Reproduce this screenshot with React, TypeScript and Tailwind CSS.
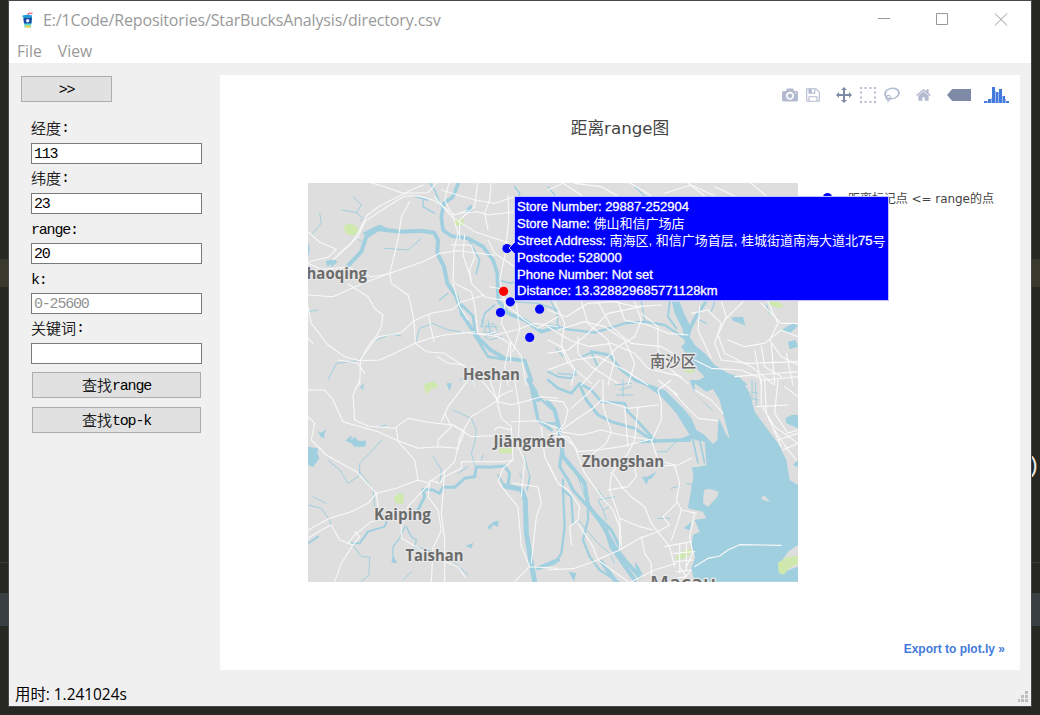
import React from "react";

const WATER = "#a0cfdf";
const LAND = "#dedede";
const PARK = "#cfe8ae";

type Road = string;

const roadsNW: Road[] = [
  "M0,155 L35,187 L85,208 L60,232 L0,246",
  "M0,250 L40,268 L120,262 L190,290 L240,282",
  "M0,345 L75,350 L160,312 L245,280 L345,245 L395,220 L450,212 L560,226",
  "M75,240 L130,190 L155,150 L178,105 L215,78 L270,50 L310,30 L345,15",
  "M90,225 L150,170 L170,125 L240,78 L290,48 L335,48 L380,62 L440,105 L480,90",
  "M160,0 L230,20 L285,40 L360,38 L385,10",
  "M305,65 L280,110 L272,170 L258,230 L245,280 L250,310 L300,345 L310,380 L318,425 L322,490 L355,515 L410,520 L470,560 L500,615",
  "M120,312 L180,350 L200,385 L225,405 L220,440 L207,465 L180,500 L158,540 L155,615",
  "M0,380 L10,430 L60,495 L110,530 L155,542 L215,540 L260,520 L322,490 L365,475 L410,465 L500,455",
  "M155,540 L210,470 L280,458 L318,422 L370,400 L435,388 L460,365 L530,345",
  "M362,405 L368,440 L378,485 M388,530 L420,550 L470,555",
  "M425,0 L410,60 L435,110 L450,160 L438,210 L435,310 L455,380 L480,420",
  "M380,50 L430,110 L500,155 L560,175 L600,188",
  "M510,0 L500,80 L455,120 L455,180 M550,0 L545,60 L530,100 L540,150",
  "M600,45 L602,120 L590,230 L575,300 L592,370 L580,430 L608,485 L640,530 L655,615",
  "M430,195 L490,195 L500,230 L485,270 L490,310 L530,350 L580,360 L640,350",
  "M440,310 L490,335 L500,375 L510,460 L570,470 L605,490 M605,490 L590,560 L600,615",
  "M455,100 L510,95 L540,105 L620,95 M400,30 L500,60 L560,70 L620,50",
  "M540,180 L560,220 L620,260 M545,320 L600,330 M460,455 L530,465 L565,455 M560,465 L625,450 L680,430 L750,440",
  "M0,475 L15,490 M90,540 L150,550 L170,580 M600,380 L650,420 L690,445 L750,410 M625,370 L635,450 L615,515",
  "M608,485 L608,545 M470,165 L465,225 L490,300",
];
const roadsNE: Road[] = [
  "M0,30 L45,10 L100,45 M80,10 L160,20 L210,48 M230,0 L290,35 L310,48 M350,40 L430,15 L500,48 M420,10 L470,48 M500,20 L560,48 M610,10 L655,48",
  "M0,390 L55,410 L120,370 L200,365 L260,380 L340,375",
  "M20,365 L50,430 L40,495 L80,570 L70,615",
  "M0,440 L65,480 L125,500 L190,490 L260,520 L300,565 L400,590",
  "M100,365 L120,430 L180,480 L200,540 L180,615",
  "M150,365 L190,440 L250,490 L340,500 L400,535",
  "M210,365 L230,420 L300,435 L360,460 L420,465",
  "M260,365 L280,420 L260,470 L210,500 L150,560 L100,615",
  "M0,520 L60,510 L120,460 L180,400 L280,380",
  "M0,570 L80,540 L150,530 L230,570 L300,615",
  "M280,400 L330,440 L330,510 L370,570 L420,610",
  "M30,450 L110,425 L170,440 L230,480 L260,550 L240,615",
  "M430,400 L480,390 L520,430 L500,490 L520,540 L600,550 L750,545",
  "M520,365 L535,410 L510,465 L530,520 L610,560 L680,615",
  "M540,480 L590,500 L650,490 L700,450 L750,470",
  "M660,365 L690,430 L665,480 L700,530 L750,555",
  "M440,540 L490,565 L580,570 L650,600 L750,590",
  "M585,365 L530,420 M640,370 L700,430 L750,430 M640,500 L650,560 L700,590",
  "M455,380 L450,450 L490,535 M620,510 L640,615 M670,490 L680,610 M715,520 L735,615 M560,590 L750,575",
  "M0,480 L40,500 L60,550 L130,610 M90,470 L90,520 L130,560 L210,610",
];
const roadsSW: Road[] = [
  "M0,30 L50,30 L75,60 L105,125 L210,155 L265,180 L330,205 L390,200 L450,205",
  "M155,0 L135,45 L140,120 L180,138 L260,145 L300,115 L360,127 L435,135 L490,170 L590,165",
  "M0,110 L20,130 L10,180 L55,225 L145,275 L205,340 L265,325 L330,300 L365,310",
  "M205,340 L180,370 L130,395 L65,415 L0,450",
  "M265,145 L270,185 L320,240 L330,300",
  "M435,135 L470,155 L450,200 L440,245 L410,275 L365,305",
  "M580,0 L570,60 L540,80 L490,110 L455,170 L450,210",
  "M520,0 L565,55 L580,115 L610,140 L615,240 L585,265 L570,305 L605,350 L630,380 L640,500 L665,560",
  "M400,125 L420,80 L455,35 L480,0 M545,0 L570,65 L610,75 L700,50 L750,55",
  "M620,0 L635,90 L630,200 L650,240 L640,350",
  "M365,305 L360,350 L390,390 L400,450 L375,505 L370,605",
  "M365,310 L300,380 L280,440 L280,475 L325,500 L375,530 L450,560 L470,590",
  "M410,270 L405,340 L400,400 L410,480 L410,605",
  "M205,340 L210,380 M120,490 L140,465 L190,425 L240,415",
  "M0,475 L40,450 L70,435 L95,480 L135,495 L155,470 L140,455 M135,495 L100,550 L80,605",
  "M365,300 L395,310 L410,290 L460,265 L460,245 L580,245 L615,240",
  "M615,310 L650,315 L690,320 L700,370 L685,410 L670,550",
  "M390,200 L390,180 L430,140 L410,100 M560,150 L570,140 L610,150 M565,60 L580,45 L615,30",
  "M665,560 L620,605 M665,560 L750,565 M700,140 L710,230 L745,300 M610,125 L690,122 L750,145",
];
const roadsSE: Road[] = [
  "M0,60 L45,65 L60,90 L50,130 L25,160 L0,165",
  "M40,150 L90,115 L135,85 L160,60 L240,85 L330,75",
  "M35,155 L100,165 L160,150 L220,165 L310,180",
  "M270,80 L260,180 L240,220 L190,280 L185,330 L215,415 L275,440 L315,450",
  "M35,160 L80,200 L110,280 L160,350 L195,390 L215,440 L215,510",
  "M310,180 L330,240 L380,255 L395,310 L385,360 L400,390 L445,400",
  "M195,280 L225,325 L255,355 L290,380 L310,430 L365,500 L380,560",
  "M20,170 L60,170 L90,215 L150,210 L220,200 L300,180",
  "M0,570 L80,565 L135,545 L215,510 L275,475 L330,455 L365,435 L345,410 L385,370",
  "M0,250 L30,310 L60,330 L95,380 L90,420 L65,440 L70,495",
  "M90,430 L135,500 L150,540 L240,605 M280,470 L290,520 L310,550 L310,605",
  "M310,185 L340,120 L340,70 L330,30 L370,0 M330,0 L370,30 L390,45",
  "M300,260 L390,255 L430,235 M180,330 L240,320 L265,290 L260,265",
  "M215,415 L220,500 M400,390 L385,440 L370,480 M440,400 L425,470 L435,520 L415,560",
  "M165,0 L165,80 L190,155 L175,190 L110,240 M230,80 L240,200",
  "M350,500 L430,485 M375,520 L440,515 M380,545 L435,540 M395,490 L395,580 M415,490 L415,570",
  "M440,560 L480,535 L515,528 L540,510 L575,494 L700,496",
  "M640,0 L640,75 L680,140 L750,190 M690,0 L680,100 L720,160 L750,150 M650,0 L655,100 L700,200 M625,80 L720,75 M710,20 L750,50 M680,150 L720,210 L745,240 M690,180 L750,160 M705,210 L750,190",
  "M360,20 L420,85 L450,115 L510,122 M440,30 L490,60 L525,100",
  "M250,605 L320,570 L385,550 M155,0 L120,40 L70,85",
  "M385,575 L430,570 L405,600 M395,560 L415,590 L385,595",
];

function Roads({ list, thick }: { list: Road[]; thick: number }) {
  return (
    <g fill="none" stroke="#f9f9f9" strokeWidth={thick} strokeLinejoin="round" strokeLinecap="round">
      {list.map((d, i) => (
        <path key={i} d={d} />
      ))}
    </g>
  );
}

const NW = "translate(308 180) scale(.33333)";
const NE = "translate(548 180) scale(.33333)";
const SW = "translate(308 380) scale(.33333)";
const SE = "translate(548 380) scale(.33333)";

function MapLabel({ x, y, w, children, size = 16.5, weight = 700 }: { x: number; y: number; w: number; children: string; size?: number; weight?: number }) {
  return (
    <text
      x={x}
      y={y}
      textLength={w}
      lengthAdjust="spacingAndGlyphs"
      fontSize={size}
      fontWeight={weight}
      fill="#6b6b6b"
      stroke="#e8e8e8"
      strokeWidth="2.5"
      strokeLinejoin="round"
      paintOrder="stroke"
      fontFamily='"Open Sans", "Noto Sans CJK SC", sans-serif'
    >
      {children}
    </text>
  );
}

function RegionMap() {
  return (
    <svg className="block h-[399px] w-[490px]" viewBox="308 183 490 399">
      <rect x="308" y="183" width="490" height="399" fill={LAND} />

      {/* parks */}
      <g fill={PARK}>
        <path transform={NW} d="M108,138 L122,130 L148,140 L152,155 L135,168 L112,160Z M440,120 L466,113 L468,136 L442,138Z M350,612 L375,604 L392,615 L350,618Z" />
        <path transform={NE} d="M662,366 L690,366 L708,378 L690,384 L665,374Z M400,566 L440,562 L442,575 L420,580Z" />
        <path transform={SW} d="M347,18 L372,5 L392,18 L370,28 L355,44Z M258,350 L275,340 L288,344 L285,372 L262,370Z M572,206 L612,200 L616,220 L575,220Z" />
      </g>

      {/* estuary */}
      <path
        transform={NE}
        fill={WATER}
        d="M372,365 L380,400 L405,450 L410,490 L400,500 L440,560 L470,590 L450,602 L430,615 L600,615 L572,590 L540,580 L500,555 L470,520 L440,495 L425,470 L430,450 L450,410 L478,365 L468,365 L438,410 L425,435 L408,400 L395,365Z"
      />
      <path
        transform={SE}
        fill={WATER}
        d="M385,0 L430,60 L450,100 L450,150 L440,180 L455,260 L432,262 L436,290 L420,385 L465,395 L475,415 L440,420 L455,455 L435,465 L430,500 L442,530 L430,565 L440,605 L750,605 L750,315 L725,300 L715,240 L690,190 L660,150 L620,95 L605,40 L585,5 L575,0Z"
      />
      <path transform={SE} fill={WATER} d="M270,0 L350,30 L400,80 L440,120 L460,160 L430,185 L320,188 L270,190 L280,180 L400,175 L425,165 L385,100 L340,50Z" />
      <g transform={SE} fill={LAND}>
        <path d="M340,0 L425,0 L440,40 L480,80 L512,110 L508,180 L495,192 L470,165 L445,150 L430,115 L395,70 L350,25Z" />
        <path d="M440,10 L475,35 L495,27 L515,60 L525,100 L545,175 L535,165 L515,120 L488,85 L440,40Z" />
        <path d="M428,178 L470,185 L476,255 L450,260 L438,225Z" />
        <path d="M468,330 L485,326 L512,335 L508,350 L480,380 L465,370Z M638,352 L650,347 L666,365 L645,360Z" />
        <path d="M750,495 L720,515 L700,545 L695,580 L750,560Z" />
      </g>
      <path transform={SE} fill={PARK} d="M380,535 L400,515 L432,505 L425,525 L395,540Z M690,548 L716,532 L750,528 L750,555 L735,558 L720,568 L708,584 L692,578Z" />
      <g transform={SE} fill="none" stroke={WATER} strokeWidth="5">
        <path d="M385,85 L435,165 M395,90 L445,155 M435,180 L450,250 M455,180 L470,250" />
        <path d="M612,0 L612,60 M622,5 L625,80 M610,35 L630,40 M610,55 L630,60" strokeWidth="3" />
      </g>

      {/* lakes */}
      <g fill={WATER}>
        <path transform={NW} d="M52,244 L80,238 L88,246 L70,262 L68,250 L60,262Z M470,92 L490,72 L494,92 L478,100Z M0,190 L5,200 L3,225 L0,228Z" />
        <path transform={NE} d="M550,412 L585,410 L592,436 L575,430 L555,422Z M700,450 L735,430 L750,438 L725,460Z M720,485 L742,480 L750,500 L725,508Z" />
        <path transform={SW} d="M0,200 L30,205 L28,220 L34,235 L15,262 L0,255Z M30,152 L40,158 L55,148 L48,165 L52,175 L38,170Z M112,182 L130,165 L130,180 L140,170 L150,182 L175,182 L172,200 L140,200 L130,190Z M155,22 L170,8 L165,20 L168,30Z M415,10 L432,10 L425,34Z M538,440 L560,424 L572,422 L570,440 L555,435 L545,450Z M472,498 L496,488 L490,505Z M255,526 L268,550 L250,548Z" />
        <path transform={SE} d="M282,290 L300,290 L325,275 L312,295 L302,298 L295,314Z M408,445 L430,425 L425,450Z M712,115 L730,105 L750,105 L750,145 L715,130Z M735,255 L750,240 L750,262Z M62,575 L85,580 L78,605Z M260,545 L272,560 L285,585 L265,580Z" />
      </g>

      {/* rivers */}
      <g fill="none" stroke={WATER} strokeLinejoin="round" strokeLinecap="round">
        <g transform={NW}>
          <path strokeWidth="12" d="M122,255 L160,215 L175,170 L210,148 L280,155 L340,152 L378,158 L390,180 L388,220 L408,260 L418,310 L445,350 L455,380" />
          <path strokeWidth="9" d="M170,160 L215,138 L240,150" />
          <path strokeWidth="11" d="M455,370 L460,400 L490,445 L508,470 L545,508 L590,535 L650,542 L670,600" />
          <path strokeWidth="8" d="M458,372 L495,408 L502,465 M500,465 L540,530 L600,540" />
          <path strokeWidth="11" d="M455,0 L435,50 L408,70 L400,110 L405,150 L430,168 L480,175 L525,200 L555,240 L568,280 L570,360 L600,400 L650,420 L700,455 L750,440" />
          <path strokeWidth="5" d="M480,175 L515,240 L505,280 M360,0 L380,30 L400,80 M620,20 L635,40 L630,60 M568,300 L610,310 L630,300 M560,375 L530,400 L520,440" />
          <path strokeWidth="3" d="M102,90 L145,98 L160,75 L135,50 M145,98 L165,115 L155,125 M10,165 L40,130 L35,100 M150,178 L165,188 M230,205 L300,210 L340,175" />
          <path strokeWidth="3" d="M322,490 L335,445 L375,430 L420,450 L460,455 L505,460 M0,395 L30,390 M60,600 L85,550 L150,542 L205,480 L250,462 L280,468" />
          <path strokeWidth="3" d="M520,420 L560,460 L525,455 L540,435 L555,430 L570,455 L530,470 L545,480 L580,470 M520,440 L570,440 M540,420 L548,470 M455,600 L480,590 L500,615" />
          <path strokeWidth="4" d="M395,360 L420,340 M345,60 L345,80 L380,100 M320,50 L360,60 M610,365 L690,370 L750,390" />
        </g>
        <g transform={NE}>
          <path strokeWidth="7" d="M0,435 L60,448 L140,458 L230,430 L290,425 L350,435 L410,475" />
          <path strokeWidth="9" d="M130,515 L185,525 L215,565 L260,600 L300,615" />
          <path strokeWidth="6" d="M365,365 L360,410 L385,445 M100,530 L130,518 L150,560 M0,575 L30,590 L70,595 L85,570" />
          <path strokeWidth="4" d="M10,365 L30,410 L25,450 M25,505 L45,530 M30,580 L85,585 M280,365 L290,420 M455,420 L475,430 M500,365 L490,395 M655,375 L665,400 M0,20 L20,45 M260,20 L290,48" />
        </g>
        <g transform={SW}>
          <path strokeWidth="9" d="M330,390 L350,350 L345,328 L375,330 L395,340 L405,322 L440,322 L470,295 L500,290 L505,260 L545,262 L590,258 L605,280 L600,315" />
          <path strokeWidth="15" d="M590,318 L640,328 L652,360 L655,460 L670,550 L680,605" />
          <path strokeWidth="5" d="M570,285 L590,318 M665,290 L658,330" />
          <path strokeWidth="6" d="M330,390 L290,400 L240,415 L230,440 L180,455 L155,490 L130,490 M0,490 L30,470" />
          <path strokeWidth="4" d="M295,440 L310,470 L325,480 L320,500 L375,515 M290,440 L275,475 L255,500 L255,530" />
          <path strokeWidth="3" d="M130,490 L160,530 L185,530 L183,585 L160,605 M155,275 L155,250 L180,225 L222,180 M60,240 L95,270 L120,310 L150,290 L155,275 L195,330 L200,380 L230,410 M435,90 L490,115 L505,150 L500,190 L490,220 L500,255 M375,228 L400,270 L395,310" />
          <path strokeWidth="3" d="M0,375 L40,385 L65,420 L70,440 M15,350 L55,370 M450,280 L480,260 M215,140 L235,135 M435,545 L480,585 M310,575 L285,600 M520,240 L525,225 M650,230 L665,290 M635,280 L645,300" />
          <path strokeWidth="10" d="M665,0 L680,70 L690,120 L730,150" />
          <path strokeWidth="12" d="M660,0 L680,30 L690,60 M690,565 L750,540" />
          <path strokeWidth="7" d="M690,50 L740,95 L750,130 M700,130 L750,130" />
        </g>
        <g transform={SE}>
          <path strokeWidth="8" d="M0,0 L30,25 L70,40 L95,10 L130,30 L160,65 L230,70 L240,95 L270,125 L320,180" />
          <path strokeWidth="9" d="M95,15 L115,60 L150,105 L190,125 L260,145 L320,185" />
          <path strokeWidth="12" d="M0,65 L20,90 L30,130 L40,190 L45,230 L75,265 L110,310 L120,375 L160,430 L200,500 L230,540 L275,590" />
          <path strokeWidth="9" d="M40,220 L35,260 L60,300 L75,330 L115,375 L190,450 L215,500" />
          <path strokeWidth="7" d="M45,300 L45,330 L70,350 L75,430 M45,330 L50,440 L40,520 L20,550 L0,555" />
          <path strokeWidth="7" d="M120,375 L120,420 L105,480 L125,530 L155,570 L210,605" />
          <path strokeWidth="12" d="M175,450 L190,500 L260,600 M160,545 L200,600" />
          <path strokeWidth="3" d="M60,250 L90,290 L110,350 M90,420 L150,490 L185,520 L200,550 M150,330 L185,380 L165,390 L150,360 L200,350 M165,390 L175,420 M200,15 L250,10 M250,20 L215,30 M225,0 L225,50 M205,45 L255,45" />
          <path strokeWidth="3" d="M330,215 L355,215 L385,185 M370,325 L390,320 M330,415 L365,415 M415,310 L435,315 M0,130 L40,140" />
        </g>
      </g>

      <g transform={NW}><Roads list={roadsNW} thick={3.2} /></g>
      <g transform={NE}><Roads list={roadsNE} thick={3.4} /></g>
      <g transform={SW}><Roads list={roadsSW} thick={3.2} /></g>
      <g transform={SE}><Roads list={roadsSE} thick={3.4} /></g>

      <MapLabel x={306.5} y={279} w={60.5}>haoqing</MapLabel>
      <MapLabel x={463} y={379.5} w={57}>Heshan</MapLabel>
      <MapLabel x={493.5} y={447} w={72}>Jiāngmén</MapLabel>
      <MapLabel x={582} y={466.5} w={82}>Zhongshan</MapLabel>
      <MapLabel x={374} y={520} w={57}>Kaiping</MapLabel>
      <MapLabel x={405.5} y={561} w={58}>Taishan</MapLabel>
      <MapLabel x={650} y={367} w={46} size={15.5} weight={500}>南沙区</MapLabel>
      <MapLabel x={650} y={590} w={66} size={19} weight={600}>Macau</MapLabel>

      <g fill="#0000ff">
        <circle cx="507" cy="248.5" r="4.6" />
        <circle cx="510.3" cy="301.8" r="4.6" />
        <circle cx="500.5" cy="312.5" r="4.6" />
        <circle cx="539.6" cy="309.2" r="4.6" />
        <circle cx="529.7" cy="337.4" r="4.6" />
      </g>
      <circle cx="503.6" cy="291.3" r="4.6" fill="#ff0000" />
    </svg>
  );
}

const glyphs = {
  camera: {
    w: 1000,
    d: "m500 450c-83 0-150-67-150-150 0-83 67-150 150-150 83 0 150 67 150 150 0 83-67 150-150 150z m400 150h-120c-16 0-34 13-39 29l-31 93c-6 15-23 28-40 28h-340c-16 0-34-13-39-28l-31-94c-6-15-23-28-40-28h-120c-55 0-100-45-100-100v-450c0-55 45-100 100-100h800c55 0 100 45 100 100v450c0 55-45 100-100 100z m-400-550c-138 0-250 112-250 250 0 138 112 250 250 250 138 0 250-112 250-250 0-138-112-250-250-250z m365 380c-19 0-35 16-35 35 0 19 16 35 35 35 19 0 35-16 35-35 0-19-16-35-35-35z",
  },
  disk: {
    w: 857,
    d: "m214-7h429v214h-429v-214z m500 0h72v500q0 8-6 21t-11 20l-157 156q-5 6-19 12t-22 5v-232q0-22-15-38t-38-16h-322q-22 0-37 16t-16 38v232h-72v-714h72v232q0 22 16 38t37 16h465q22 0 38-16t15-38v-232z m-214 518v178q0 8-5 13t-13 5h-107q-7 0-13-5t-5-13v-178q0-8 5-13t13-5h107q7 0 13 5t5 13z m357-18v-518q0-22-15-38t-38-16h-750q-23 0-38 16t-16 38v750q0 22 16 38t38 16h517q23 0 50-12t42-26l156-157q16-15 27-42t11-49z",
  },
  pan: {
    w: 1000,
    d: "m1000 350l-187 188 0-125-250 0 0 250 125 0-188 187-187-187 125 0 0-250-250 0 0 125-188-188 186-187 0 125 252 0 0-250-125 0 187-188 188 188-125 0 0 250 250 0 0-126 187 188z",
  },
  lasso: {
    w: 1031,
    d: "m1018 538c-36 207-290 336-568 286-277-48-473-256-436-463 10-57 36-108 76-151-13-66 11-137 68-183 34-28 75-41 114-42l-55-70 0 0c-2-1-3-2-4-3-10-14-8-34 5-45 14-11 34-8 45 4 1 1 2 3 2 5l0 0 113 140c16 11 31 24 45 40 4 3 6 7 8 11 48-3 100 0 151 9 278 48 473 255 436 462z m-624-379c-80 14-149 48-197 96 42 42 109 47 156 9 33-26 47-66 41-105z m-187-74c-19 16-33 37-39 60 50-32 109-55 174-68-42-25-95-24-135 8z m360 75c-34-7-69-9-102-8 8 62-16 128-68 170-73 59-175 54-244-5-9 20-16 40-20 61-28 159 121 317 333 354s407-60 434-217c28-159-121-318-333-355z",
  },
  home: {
    w: 929,
    d: "m786 296v-267q0-15-11-26t-25-10h-214v214h-143v-214h-214q-15 0-25 10t-11 26v267q0 1 0 2t0 2l321 264 321-264q1-1 1-4z m124 39l-34-41q-5-5-12-6h-2q-7 0-12 3l-386 322-386-322q-7-4-13-4-7 2-12 7l-35 41q-4 5-3 13t6 12l401 334q18 15 42 15t43-15l136-114v109q0 8 5 13t13 5h107q8 0 13-5t5-13v-227l122-102q5-5 6-12t-4-13z",
  },
};

function Glyph({ name, className }: { name: keyof typeof glyphs; className: string }) {
  const g = glyphs[name];
  return (
    <svg className={className} viewBox={`0 0 ${g.w} 1000`} fill="currentColor">
      <path d={g.d} transform="matrix(1 0 0 -1 0 850)" />
    </svg>
  );
}

function ModeBar() {
  const dots = [0, 4.5, 9.5, 14];
  return (
    <div className="flex h-4 items-center justify-end pr-[11px] text-[#b4bbd1]">
      <Glyph name="camera" className="h-4 w-4" />
      <Glyph name="disk" className="ml-2 h-4 w-[14px]" />
      <Glyph name="pan" className="ml-4 h-4 w-4 text-[#7f8ba6]" />
      <svg className="ml-2 h-4 w-4" viewBox="0 0 16 16" fill="currentColor">
        {dots.map((p) => (
          <g key={p}>
            <rect x={p} y="0" width="2" height="2" />
            <rect x={p} y="14" width="2" height="2" />
            <rect x="0" y={p} width="2" height="2" />
            <rect x="14" y={p} width="2" height="2" />
          </g>
        ))}
      </svg>
      <Glyph name="lasso" className="ml-2 h-4 w-4" />
      <Glyph name="home" className="ml-4 h-4 w-[15px]" />
      <svg className="ml-4 h-3 w-6" viewBox="0 0 24 12">
        <path d="M0 6 L5 .3 Q5.5 0 6 0 H24 V12 H6 Q5.5 12 5 11.7Z" fill="#7f8ba6" />
      </svg>
      <svg className="ml-[13px] h-4 w-[25px]" viewBox="0 0 25 16" shapeRendering="crispEdges">
        <g fill="#447adb">
          <path d="M0 14h3v2H0z M4 12h3v4H4z M8 0h3v16H8z M12 5h2v11h-2z M15 2h3v14h-3z M19 9h2v7h-2z M22 14h3v2h-3z" />
        </g>
        <path d="M3 14h1v2H3z M7 11h1v5H7z M11 4h1v12h-1z M14 5h1v11h-1z M18 9h1v7h-1z M21 12h1v4h-1z" fill="#9ebcf0" />
      </svg>
    </div>
  );
}

const mono = "font-['Liberation_Mono',monospace] text-[15px] tracking-[-1.2px]";
const cjk = "font-['Noto_Sans_CJK_SC',sans-serif] text-[15px] font-light tracking-normal [-webkit-text-stroke:0.2px_black]";

function Field({ zh, en, value, hint }: { zh?: string; en: string; value?: string; hint?: boolean }) {
  return (
    <div className="flex h-[50px] flex-col">
      <label className={`flex h-[29px] items-center leading-none text-black ${zh ? "pb-[3px]" : "pt-[3px]"}`}>
        {zh && <span className={cjk}>{zh}</span>}
        <span className={`${mono} ${zh ? "pt-[3px]" : ""}`}>{en}</span>
      </label>
      <div className={`flex h-[21px] w-[171px] items-center border border-[#7a7a7a] bg-white pl-[2px] pt-[2px] leading-none ${hint ? "text-[#929292]" : "text-black"}`}>
        <span className={mono}>{value}</span>
      </div>
    </div>
  );
}

function SearchButton({ zh, en }: { zh: string; en: string }) {
  return (
    <button className="flex h-[26px] w-[169px] items-center justify-center border border-[#adadad] bg-[#e1e1e1] leading-none text-black">
      <span className={`${cjk} -mt-px`}>{zh}</span>
      <span className={`${mono} pt-[3px]`}>{en}</span>
    </button>
  );
}

function TipLine({ label, zh, tail, end, className = "h-[17px]" }: { label: string; zh?: string; tail?: string; end?: string; className?: string }) {
  return (
    <div className={`flex items-center whitespace-pre leading-none ${className}`}>
      <span>{label}</span>
      {zh && <span className="font-['Liberation_Sans','Noto_Sans_CJK_SC',sans-serif] [-webkit-text-stroke:0px]">{zh}</span>}
      {tail && <span>{tail}</span>}
      {end && <span className="font-['Noto_Sans_CJK_SC',sans-serif] [-webkit-text-stroke:0px]">{end}</span>}
    </div>
  );
}

function HoverCard() {
  return (
    <div className="absolute left-[294px] top-[121px] h-[105px] w-[375px] border border-[#c0c0ff] bg-[#0000ff] pl-[2px] pt-[1px] font-['Liberation_Sans',sans-serif] text-[13px] text-white [-webkit-text-stroke:0.3px_white]">
      <svg className="absolute -left-[7px] top-[45px] h-3 w-[7px]" viewBox="0 0 7 12">
        <path d="M7 0 L1 6 L7 12Z" fill="#0000ff" />
        <path d="M7 0 L1 6 L7 12" fill="none" stroke="#c0c0ff" />
      </svg>
      <TipLine label="Store Number: 29887-252904" />
      <TipLine label="Store Name: " zh="佛山和信广场店" />
      <TipLine label="Street Address: " zh="南海区, 和信广场首层, 桂城街道南海大道北" tail="75" end="号" />
      <TipLine label="Postcode: 528000" />
      <TipLine label="Phone Number: Not set" />
      <TipLine label="Distance: 13.328829685771128km" className="h-[15px]" />
    </div>
  );
}

function CupIcon() {
  return (
    <svg className="h-4 w-4" viewBox="0 0 16 16">
      <path d="M7.5 4 L8.5 1.5 L10 .8 M10 2 L12.5 .8" fill="none" stroke="#ee5577" strokeWidth="1.1" />
      <path d="M2.5 3.5 Q7.5 1.8 12 3.5 V5 H2.5Z" fill="#1ba1d9" />
      <path d="M3.5 5 H12 L11 15.5 H4.5Z" fill="#56dcd8" />
      <path d="M3.3 5.5 H12 L11.4 11.5 H4Z" fill="#1748a8" />
      <circle cx="7.7" cy="8.7" r="1.7" fill="#e6f3ff" />
      <path d="M5 13.5 H10.7 V15.5 H5Z" fill="#f7d34a" />
    </svg>
  );
}

function Backdrop() {
  return (
    <div className="flex h-full w-full flex-col bg-[#272822]">
      <div className="mt-[259px] h-7 bg-[#3a392d]" />
      <div className="mt-[275px] h-px bg-[#3a3a3c]" />
      <div className="mt-[30px] h-[33px] bg-[#3a3f42]" />
    </div>
  );
}

export default function App() {
  return (
    <div className="relative h-[715px] w-[1040px] overflow-hidden">
      <div className="absolute inset-0">
        <Backdrop />
        <span className="absolute right-0 top-[455px] font-['Liberation_Mono',monospace] text-[22px] leading-6 text-[#eeeee8]">)</span>
      </div>

      <div className="absolute left-[9px] top-[1px] flex h-[705px] w-[1022px] flex-col bg-[#f0f0f0] outline outline-1 outline-[#484846]">
        <header className="flex h-[37px] shrink-0 items-center bg-white pl-[11px] font-['Open_Sans',sans-serif] text-[16px] text-[#999999]">
          <CupIcon />
          <span className="ml-[7px] tracking-[-0.14px]">E:/1Code/Repositories/StarBucksAnalysis/directory.csv</span>
          <div className="ml-auto flex items-center pr-[23px]">
            <svg className="h-[13px] w-[130px]" viewBox="0 0 130 13" fill="none" stroke="#999999">
              <path d="M0 5.5 H12 M58.5 .5 H69.5 V11.5 H58.5Z" />
              <path d="M117 .5 L129 12.5 M129 .5 L117 12.5" />
            </svg>
          </div>
        </header>
        <nav className="flex h-[25px] shrink-0 items-center gap-[16px] bg-white pl-2 pt-[2px] font-['Open_Sans',sans-serif] text-[15.7px] leading-none text-[#999999]">
          <span>File</span>
          <span>View</span>
        </nav>

        <div className="flex h-[607px] shrink-0">
          <aside className="w-[211px] pl-3 pt-[13px]">
            <button className={`flex h-[26px] w-[91px] items-center justify-center border border-[#adadad] bg-[#e1e1e1] pt-[2px] leading-none text-black ${mono}`}>
              {">>"}
            </button>
            <div className="ml-[10px] mt-3">
              <Field zh="经度" en=":" value="113" />
              <Field zh="纬度" en=":" value="23" />
              <Field en="range:" value="20" />
              <Field en="k:" value="0-25600" hint />
              <Field zh="关键词" en=":" />
              <div className="ml-px mt-2 flex flex-col gap-[9px]">
                <SearchButton zh="查找" en="range" />
                <SearchButton zh="查找" en="top-k" />
              </div>
            </div>
          </aside>

          <main className="relative mt-3 flex h-[595px] w-[800px] flex-col bg-white pt-3">
            <ModeBar />
            <h1 className="mt-[15px] flex h-5 items-center justify-center font-['DejaVu_Sans','Noto_Sans_CJK_SC',sans-serif] text-[16.7px] font-normal leading-none text-[#444444]">
              距离range图
            </h1>
            <div className="mt-[45px] flex">
              <div className="ml-[88px]">
                <RegionMap />
              </div>
              <div className="ml-[25px] flex h-[30px] items-center gap-[16px] whitespace-nowrap">
                <span className="-mt-[2px] h-[9px] w-[9px] rounded-full bg-[#0000ff]" />
                <span className="pt-px font-['DejaVu_Sans','Noto_Sans_CJK_SC',sans-serif] text-[12px] leading-none tracking-[-0.05px] text-[#444444]">
                  距离标记点 &lt;= range的点
                </span>
              </div>
            </div>
            <a className="mr-[15px] mt-auto mb-[12px] self-end font-['Liberation_Sans',sans-serif] text-[12px] font-bold text-[#447adb]">
              Export to plot.ly »
            </a>
            <HoverCard />
          </main>
        </div>

        <footer className="flex flex-1 items-center justify-between pl-[6px] pr-[3px] pt-[13px]">
          <span className="font-['Open_Sans','Noto_Sans_CJK_SC',sans-serif] text-[15.4px] leading-none text-black">用时: 1.241024s</span>
          <svg className="mt-1 h-[11px] w-[10px]" viewBox="0 0 10 11" fill="#bdbdbd">
            <path d="M7 0h3v3H7z M3 4h3v3H3z M7 4h3v3H7z M0 8h2v3H0z M3 8h3v3H3z M7 8h3v3H7z" />
          </svg>
        </footer>
      </div>
    </div>
  );
}
